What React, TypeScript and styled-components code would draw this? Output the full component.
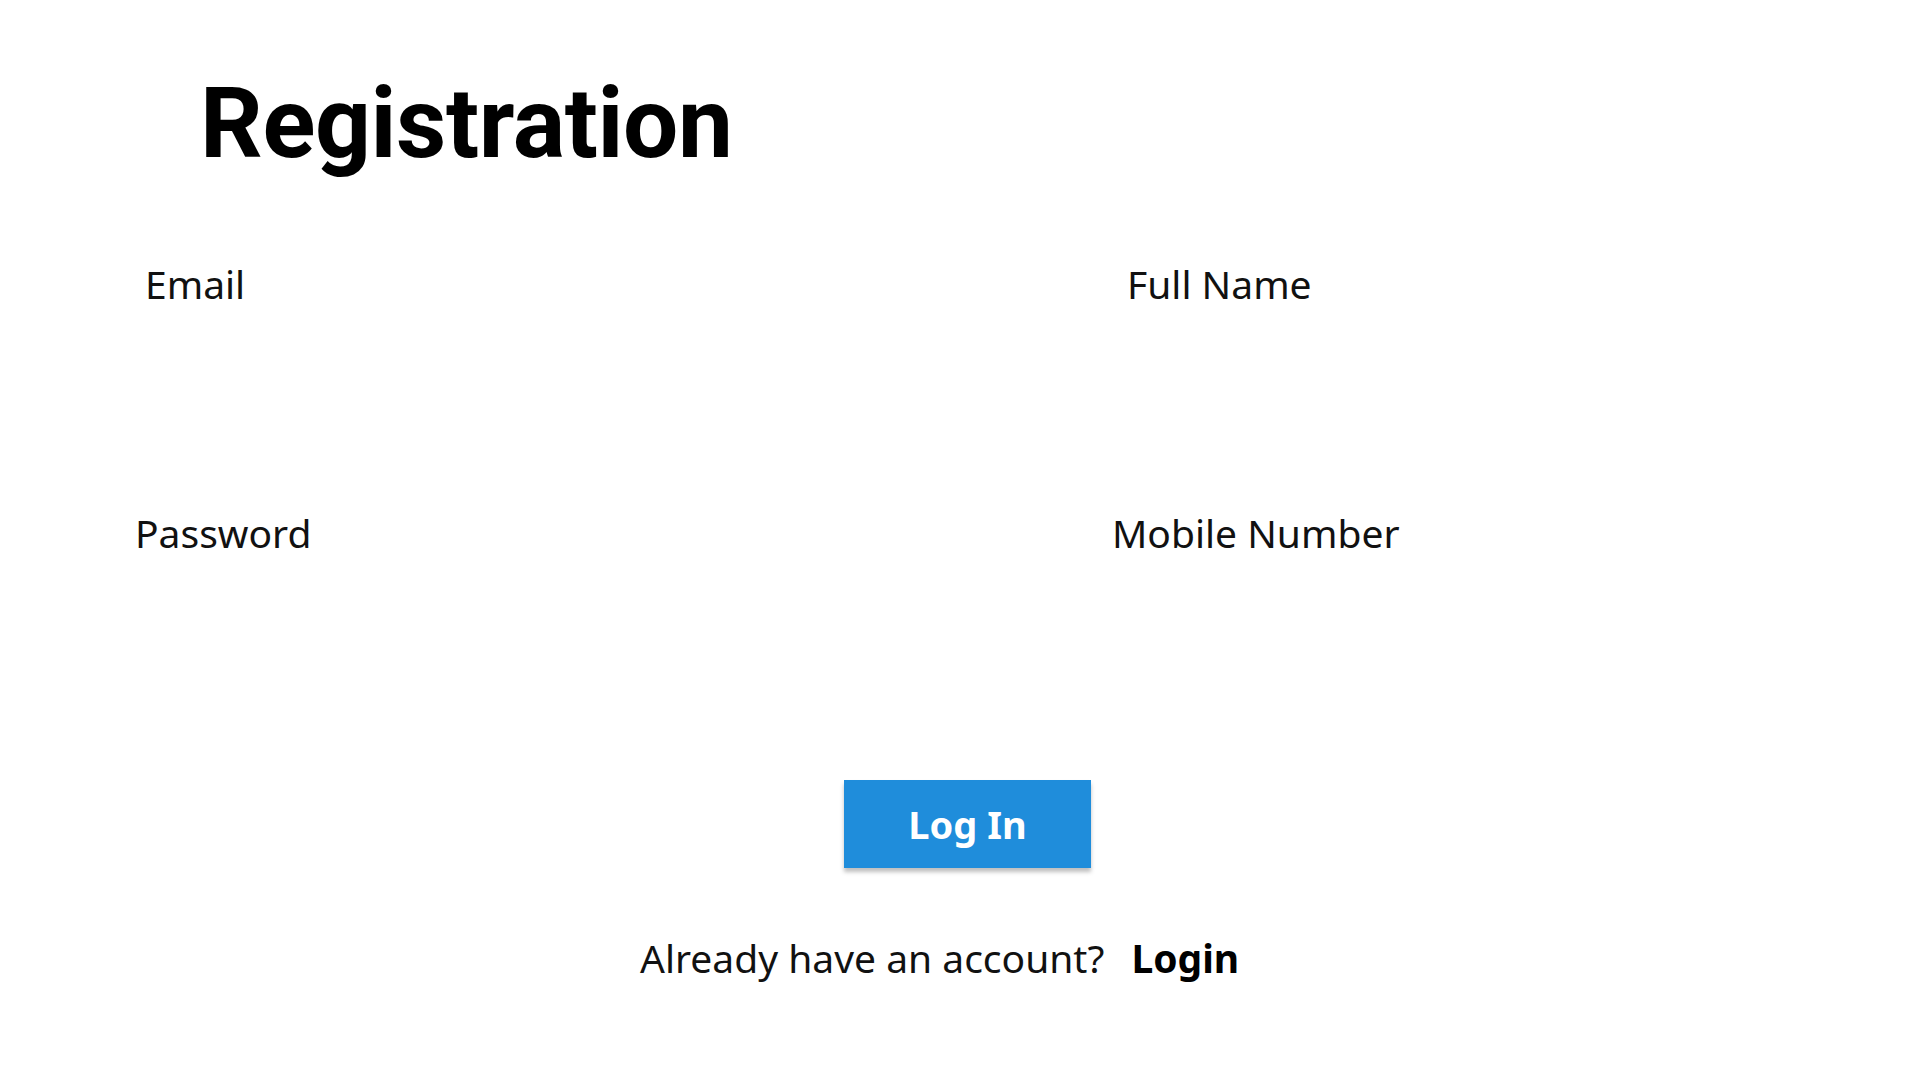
import React from "react";
import styled, { createGlobalStyle } from "styled-components";

const GlobalStyle = createGlobalStyle`
  html, body {
    margin: 0;
    padding: 0;
    background: #ffffff;
  }
  body {
    font-family: "Noto Sans", "DejaVu Sans", sans-serif;
    color: #000000;
  }
  * { box-sizing: border-box; }
`;

const Page = styled.main`
  width: 1920px;
  min-height: 1080px;
  display: flex;
  flex-direction: column;
  padding-top: 74px;
`;

const Title = styled.h1`
  margin: 0 0 0 200px;
  font-family: Roboto, "Liberation Sans", sans-serif;
  font-weight: 700;
  font-size: 98px;
  line-height: 100px;
  letter-spacing: -0.4px;
  color: #000;
`;

const FormGrid = styled.form`
  margin-top: 90px;
  padding-left: 135px;
  display: grid;
  grid-template-columns: 977px 1fr;
  row-gap: 40px;
`;

const Field = styled.div`
  display: flex;
  flex-direction: column;
  gap: 20px;
`;

const Label = styled.label<{ $indent?: number }>`
  margin-left: ${(p) => p.$indent ?? 0}px;
  font-family: "Noto Sans", "DejaVu Sans", sans-serif;
  font-weight: 400;
  font-size: 39px;
  line-height: 39px;
  color: #111;
`;

const Input = styled.input`
  height: 150px;
  width: 700px;
  border: none;
  outline: none;
  background: transparent;
  font-family: "Noto Sans", sans-serif;
  font-size: 32px;
`;

const ButtonRow = styled.div`
  margin-top: 58px;
  padding-left: 844px;
  display: flex;
`;

const SubmitButton = styled.button`
  width: 247px;
  height: 88px;
  border: none;
  border-radius: 0;
  background: #1f8ddb;
  color: #ffffff;
  font-family: "Noto Sans", "DejaVu Sans", sans-serif;
  font-weight: 700;
  font-size: 38px;
  line-height: 38px;
  box-shadow: 0 4px 4px rgba(0, 0, 0, 0.25);
  cursor: pointer;
`;

const Footer = styled.p`
  margin: 70px 0 0 0;
  padding-left: 640px;
  display: flex;
  gap: 27px;
  font-family: "Noto Sans", "DejaVu Sans", sans-serif;
  font-size: 39px;
  line-height: 39px;
  color: #111;
`;

const LoginLink = styled.a`
  font-weight: 700;
  color: #000;
  text-decoration: none;
  cursor: pointer;
`;

const fields = [
  { id: "email", label: "Email", type: "email", indent: 10 },
  { id: "fullname", label: "Full Name", type: "text", indent: 15 },
  { id: "password", label: "Password", type: "password", indent: 0 },
  { id: "mobile", label: "Mobile Number", type: "tel", indent: 0 },
];

export default function App() {
  return (
    <>
      <GlobalStyle />
      <Page>
        <Title>Registration</Title>
        <FormGrid onSubmit={(e) => e.preventDefault()}>
          {fields.map((f) => (
            <Field key={f.id}>
              <Label htmlFor={f.id} $indent={f.indent}>
                {f.label}
              </Label>
              <Input id={f.id} type={f.type} />
            </Field>
          ))}
        </FormGrid>
        <ButtonRow>
          <SubmitButton type="button">Log In</SubmitButton>
        </ButtonRow>
        <Footer>
          <span>Already have an account?</span>
          <LoginLink>Login</LoginLink>
        </Footer>
      </Page>
    </>
  );
}
